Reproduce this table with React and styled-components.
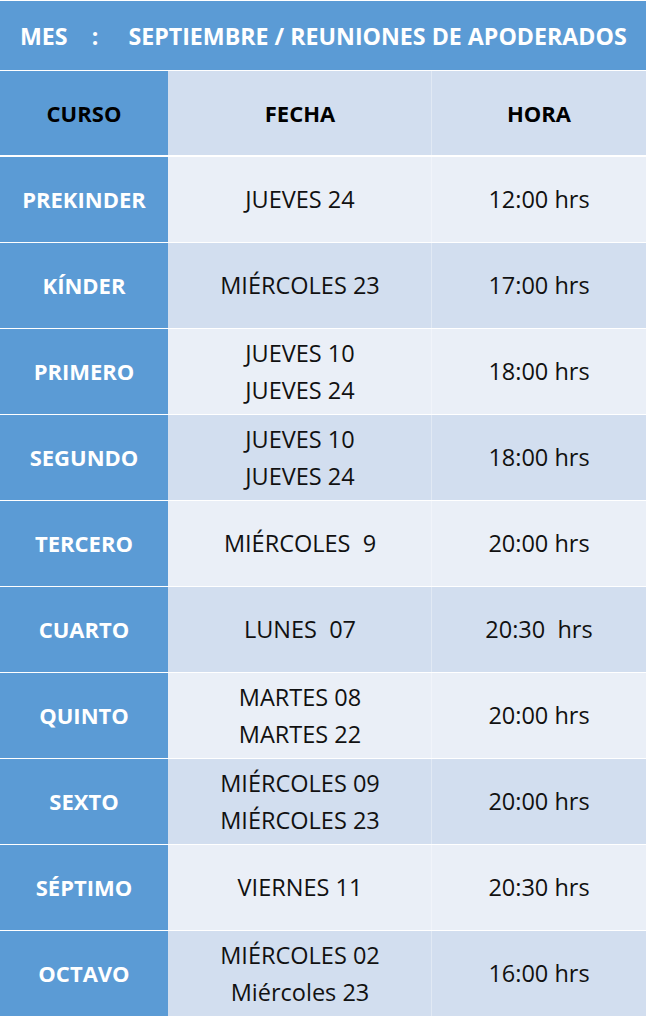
import React from "react";
import styled, { createGlobalStyle } from "styled-components";

const Global = createGlobalStyle`
  html, body { margin: 0; padding: 0; background: #ffffff; }
  body { font-family: "Open Sans", Lato, sans-serif; }
`;

const Sheet = styled.div`
  width: 646px;
  display: flex;
  flex-direction: column;
  gap: 1px;
  background: #ffffff;
  padding-top: 1px;
`;

const TitleBar = styled.div`
  height: 69px;
  background: #5b9bd5;
  color: #ffffff;
  font-weight: 700;
  font-size: 23.2px;
  display: flex;
  align-items: center;
  padding-left: 20px;
  white-space: pre;
`;

const Table = styled.div`
  display: grid;
  grid-template-columns: 168px 264px 1fr;
  grid-auto-rows: 85px;
  row-gap: 1px;
  background: #ffffff;
  & > :nth-child(-n + 3) { height: 84px; }
`;

const Cell = styled.div`
  display: flex;
  flex-direction: column;
  align-items: center;
  justify-content: center;
  text-align: center;
  font-size: 23.5px;
  line-height: 37px;
  color: #111111;
  background: ${(p) => (p.$shade === "dark" ? "#d2deef" : "#eaeff7")};
`;

const DateCell = styled(Cell)`
  box-shadow: inset -1px 0 0 rgba(255, 255, 255, 0.35);
`;

const CourseCell = styled(Cell)`
  background: #5b9bd5;
  color: #ffffff;
  font-weight: 700;
  font-size: 22px;
`;

const HeadCell = styled(Cell)`
  background: ${(p) => (p.$blue ? "#5b9bd5" : "#d2deef")};
  color: #000000;
  font-weight: 700;
  font-size: 22px;
  box-shadow: ${(p) => (p.$divider ? "inset -1px 0 0 rgba(255, 255, 255, 0.35)" : "none")};
`;

const Line = styled.span`
  display: block;
  white-space: pre;
`;

const rows = [
  ["PREKINDER", ["JUEVES 24"], "12:00 hrs"],
  ["KÍNDER", ["MIÉRCOLES 23"], "17:00 hrs"],
  ["PRIMERO", ["JUEVES 10", "JUEVES 24"], "18:00 hrs"],
  ["SEGUNDO", ["JUEVES 10", "JUEVES 24"], "18:00 hrs"],
  ["TERCERO", ["MIÉRCOLES  9"], "20:00 hrs"],
  ["CUARTO", ["LUNES  07"], "20:30  hrs"],
  ["QUINTO", ["MARTES 08", "MARTES 22"], "20:00 hrs"],
  ["SEXTO", ["MIÉRCOLES 09", "MIÉRCOLES 23"], "20:00 hrs"],
  ["SÉPTIMO", ["VIERNES 11"], "20:30 hrs"],
  ["OCTAVO", ["MIÉRCOLES 02", "Miércoles 23"], "16:00 hrs"],
];

export default function App() {
  return (
    <>
      <Global />
      <Sheet>
        <TitleBar>{"MES    :     SEPTIEMBRE / REUNIONES DE APODERADOS"}</TitleBar>
        <Table>
          <HeadCell $blue>CURSO</HeadCell>
          <HeadCell $divider>FECHA</HeadCell>
          <HeadCell>HORA</HeadCell>
          {rows.map(([curso, fechas, hora], i) => {
            const shade = i % 2 === 0 ? "light" : "dark";
            return (
              <React.Fragment key={curso}>
                <CourseCell>{curso}</CourseCell>
                <DateCell $shade={shade}>
                  {fechas.map((f) => (
                    <Line key={f}>{f}</Line>
                  ))}
                </DateCell>
                <Cell $shade={shade}>
                  <Line>{hora}</Line>
                </Cell>
              </React.Fragment>
            );
          })}
        </Table>
      </Sheet>
    </>
  );
}
